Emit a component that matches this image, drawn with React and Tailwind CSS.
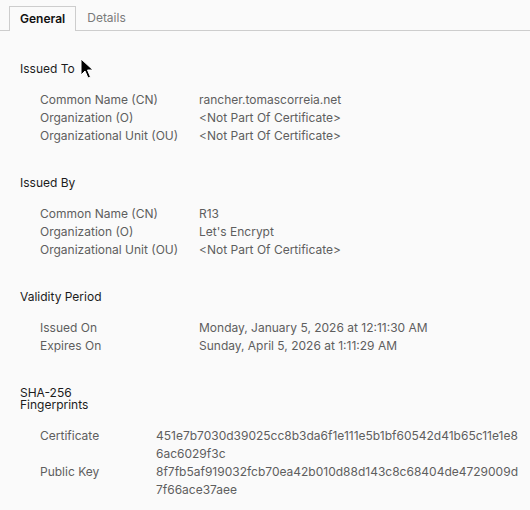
import { Fragment } from 'react';

const sections = [
  {
    title: 'Issued To',
    cols: 'grid-cols-[159px_1fr]',
    rows: [
      ['Common Name (CN)', 'rancher.tomascorreia.net'],
      ['Organization (O)', '<Not Part Of Certificate>'],
      ['Organizational Unit (OU)', '<Not Part Of Certificate>'],
    ],
  },
  {
    title: 'Issued By',
    cols: 'grid-cols-[159px_1fr]',
    rows: [
      ['Common Name (CN)', 'R13'],
      ['Organization (O)', "Let's Encrypt"],
      ['Organizational Unit (OU)', '<Not Part Of Certificate>'],
    ],
  },
  {
    title: 'Validity Period',
    cols: 'grid-cols-[159px_1fr]',
    rows: [
      ['Issued On', 'Monday, January 5, 2026 at 12:11:30 AM'],
      ['Expires On', 'Sunday, April 5, 2026 at 1:11:29 AM'],
    ],
  },
  {
    title: 'SHA-256 Fingerprints',
    cols: 'grid-cols-[116px_1fr]',
    lead: 'leading-[12px] pt-px',
    rows: [
      ['Certificate', '451e7b7030d39025cc8b3da6f1e111e5b1bf60542d41b65c11e1e86ac6029f3c'],
      ['Public Key', '8f7fb5af919032fcb70ea42b010d88d143c8c68404de4729009d7f66ace37aee'],
    ],
  },
];

function Cursor() {
  return (
    <svg
      className="absolute left-[80px] top-[58px]"
      width="14"
      height="22"
      viewBox="0 0 14 22"
    >
      <path
        d="M1 1 L1 17 L5 13 L8 20 L10.5 19 L7.5 12 L13 12 Z"
        fill="#000"
        stroke="#fff"
        strokeWidth="1"
        strokeLinejoin="round"
      />
    </svg>
  );
}

export default function App() {
  return (
    <div
      className="relative w-[530px] h-[510px] overflow-hidden bg-[#fafafa] text-[12px]"
      style={{ fontFamily: 'Inter, "Noto Sans", sans-serif' }}
    >
      <div className="flex items-end h-[31px] border-b border-[#cdcdcd] pl-[9px]">
        <div className="h-[25px] -mb-px px-[10px] flex items-center border border-b-0 border-[#cdcdcd] bg-[#fafafa] font-semibold text-[#111]">
          General
        </div>
        <div className="h-[25px] px-[11px] flex items-center text-[#7a7a7a]">
          Details
        </div>
      </div>

      <div className="pl-[20px] pr-[8px] pt-[31px]">
        {sections.map((s) => (
          <section key={s.title} className="mb-[31px]">
            <h2 className={`max-w-[100px] text-[#1c1c1c] ${s.lead || 'leading-[13px]'}`}>{s.title}</h2>
            <div className={`grid ${s.cols} mt-[16px] pl-[20px] leading-[18px] text-[#5e5e5e]`}>
              {s.rows.map(([label, value]) => (
                <Fragment key={label}>
                  <div>{label}</div>
                  <div className="break-all">{value}</div>
                </Fragment>
              ))}
            </div>
          </section>
        ))}
      </div>

      <Cursor />
    </div>
  );
}
